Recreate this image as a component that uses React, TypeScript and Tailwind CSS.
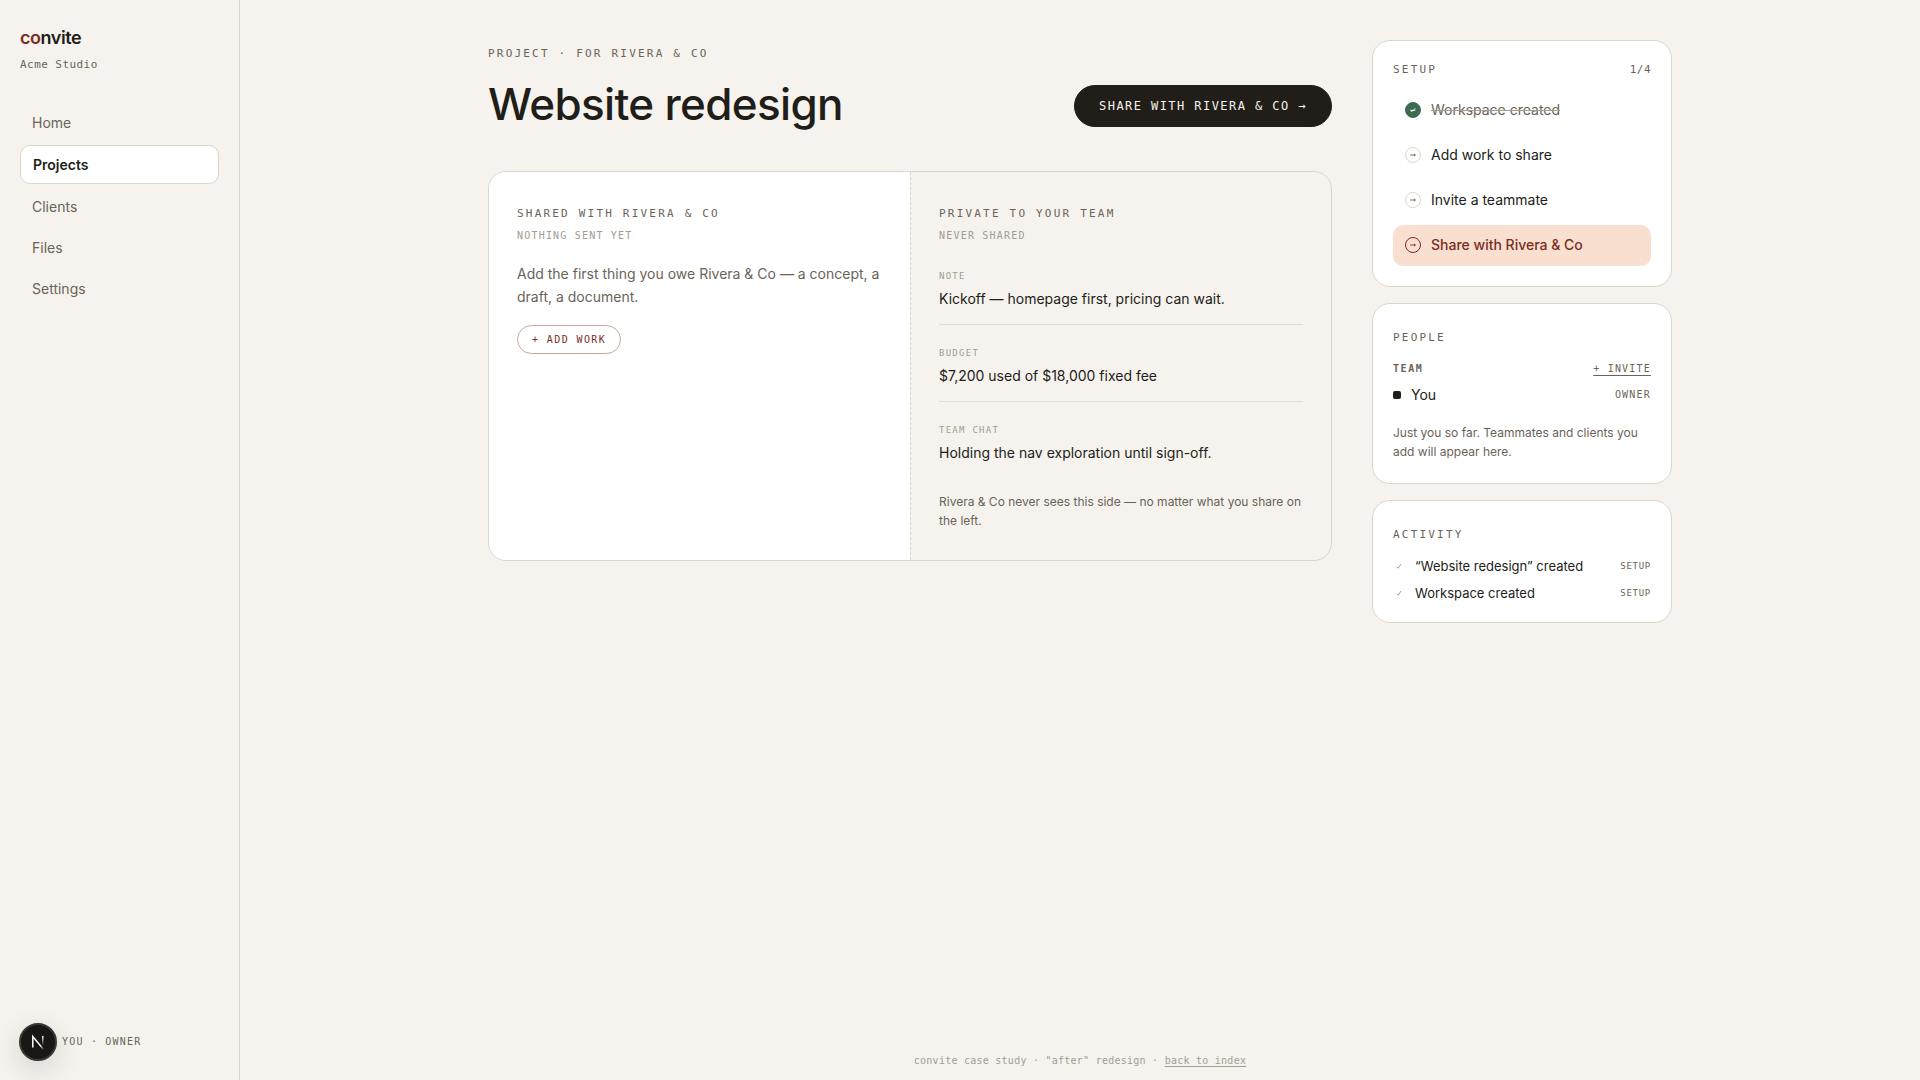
import React from "react";
import clsx from "clsx";

const mono = "font-['DejaVu_Sans_Mono',monospace]";

const navItems = ["Home", "Projects", "Clients", "Files", "Settings"];

const steps = [
  { label: "Workspace created", state: "done" },
  { label: "Add work to share", state: "todo" },
  { label: "Invite a teammate", state: "todo" },
  { label: "Share with Rivera & Co", state: "current" },
];

const privateItems = [
  { label: "Note", text: "Kickoff — homepage first, pricing can wait." },
  { label: "Budget", text: "$7,200 used of $18,000 fixed fee" },
  { label: "Team chat", text: "Holding the nav exploration until sign-off." },
];

const activity = ["“Website redesign” created", "Workspace created"];

function Label({ children }: { children: React.ReactNode }) {
  return (
    <h2
      className={clsx(
        mono,
        "text-[11px] leading-[18px] tracking-[0.2em] uppercase text-[#6b6358]"
      )}
    >
      {children}
    </h2>
  );
}

function Card({
  className,
  children,
}: {
  className: string;
  children: React.ReactNode;
}) {
  return (
    <section
      className={clsx(
        "rounded-[18px] border border-[#dcd6ca] bg-white px-5",
        className
      )}
    >
      {children}
    </section>
  );
}

function StepIcon({ state }: { state: string }) {
  return (
    <span
      className={clsx(
        "flex size-4 shrink-0 items-center justify-center rounded-full border",
        state === "done" && "border-[#3d6b4f] bg-[#3d6b4f] text-white",
        state === "todo" && "border-[#dcd6ca] text-[#6b6358]",
        state === "current" && "border-[#7a2e1f] text-[#7a2e1f]"
      )}
    >
      <svg
        viewBox="0 0 8 8"
        className="size-2"
        fill="none"
        stroke="currentColor"
        strokeWidth="0.9"
      >
        {state === "done" ? (
          <path d="M1.6 4.4 3 5.6 6.2 2.4M1.4 4.3h5" />
        ) : (
          <path d="M1.2 4h5.2M5 2.8 6.4 4 5 5.2" />
        )}
      </svg>
    </span>
  );
}

function Sidebar() {
  return (
    <aside className="sticky top-0 flex h-screen w-60 shrink-0 flex-col border-r border-[#dcd6ca] px-5 pt-6 pb-[19px]">
      <p className="text-lg leading-7 font-semibold tracking-tight">
        <span className="text-[#7a2e1f]">co</span>nvite
      </p>
      <p
        className={clsx(
          mono,
          "mt-1 text-[11px] leading-[18px] tracking-[0.04em] text-[#6b6358]"
        )}
      >
        Acme Studio
      </p>
      <nav className="mt-[30px] flex flex-col gap-1">
        {navItems.map((item) => (
          <a
            key={item}
            href="#"
            className={clsx(
              "rounded-[10px] px-3 py-2 text-sm leading-[21px]",
              item === "Projects"
                ? "border border-[#dcd6ca] bg-white font-semibold"
                : "text-[#6b6358]"
            )}
          >
            {item}
          </a>
        ))}
      </nav>
      <div className="mt-auto flex items-center gap-[5px]">
        <button
          aria-label="Open dev tools"
          className="-ml-px flex size-[38px] items-center justify-center rounded-full border-2 border-[#3a3936] bg-[#181715] shadow-[0_8px_28px_rgba(0,0,0,0.14)]"
        >
          <svg viewBox="0 0 14 16" className="h-4 w-3.5" fill="none">
            <defs>
              <linearGradient id="stem" x1="0" y1="0" x2="0" y2="1">
                <stop stopColor="#fff" />
                <stop offset="1" stopColor="#fff" stopOpacity="0" />
              </linearGradient>
              <linearGradient id="diag" x1="0" y1="0" x2="1" y2="1">
                <stop offset="0.7" stopColor="#fff" />
                <stop offset="1" stopColor="#fff" stopOpacity="0.1" />
              </linearGradient>
            </defs>
            <path d="M1.8 13.5V2.5L12.4 15.2" stroke="url(#diag)" strokeWidth="1.5" />
            <rect x="11" y="2" width="1.5" height="9.5" fill="url(#stem)" />
          </svg>
        </button>
        <p
          className={clsx(
            mono,
            "text-[10px] leading-4 tracking-[0.12em] uppercase text-[#6b6358]"
          )}
        >
          You · Owner
        </p>
      </div>
    </aside>
  );
}

function Board() {
  return (
    <div className="mt-[42px] grid grid-cols-2 overflow-hidden rounded-[18px] border border-[#dcd6ca]">
      <section className="bg-white px-7 pt-[33px] pb-7">
        <Label>Shared with Rivera & Co</Label>
        <p
          className={clsx(
            mono,
            "mt-[5px] text-[10px] leading-4 tracking-[0.12em] uppercase text-[#a39c92]"
          )}
        >
          Nothing sent yet
        </p>
        <p className="mt-[18px] text-sm leading-[23px] text-[#6b6358]">
          Add the first thing you owe Rivera & Co — a concept, a draft, a
          document.
        </p>
        <button
          className={clsx(
            mono,
            "mt-[17px] rounded-full border border-[#c9a59c] px-3.5 py-1.5 text-[10px] leading-[15px] tracking-[0.14em] uppercase text-[#7a2e1f]"
          )}
        >
          + Add work
        </button>
      </section>
      <section className="border-l border-dashed border-[#dcd6ca] px-7 pt-[33px] pb-[30px]">
        <Label>Private to your team</Label>
        <p
          className={clsx(
            mono,
            "mt-[5px] text-[10px] leading-4 tracking-[0.12em] uppercase text-[#a39c92]"
          )}
        >
          Never shared
        </p>
        <div className="mt-1 divide-y divide-[#e2ddd2]">
          {privateItems.map((item) => (
            <div key={item.label} className="pt-5 pb-[13px]">
              <p
                className={clsx(
                  mono,
                  "text-[9px] leading-4 tracking-[0.14em] uppercase text-[#a39c92]"
                )}
              >
                {item.label}
              </p>
              <p className="mt-[3px] text-sm leading-6">{item.text}</p>
            </div>
          ))}
        </div>
        <p className="mt-3.5 text-xs leading-[19px] text-[#6b6358]">
          Rivera & Co never sees this side — no matter what you share on the
          left.
        </p>
      </section>
    </div>
  );
}

function Rail() {
  return (
    <aside className="flex w-[300px] shrink-0 flex-col gap-4">
      <Card className="pt-5 pb-5">
        <div className="flex items-center justify-between">
          <Label>Setup</Label>
          <span
            className={clsx(
              mono,
              "text-[11px] leading-[18px] tracking-[0.04em] text-[#6b6358]"
            )}
          >
            1/4
          </span>
        </div>
        <ul className="mt-[11px] flex flex-col gap-1">
          {steps.map((step) => (
            <li key={step.label}>
              <a
                href="#"
                className={clsx(
                  "flex items-center gap-2.5 rounded-[10px] px-3 pt-[9px] pb-[11px] text-sm leading-[21px]",
                  step.state === "current" &&
                    "bg-[#f8dfd0] font-medium text-[#7a2e1f]"
                )}
              >
                <StepIcon state={step.state} />
                <span
                  className={clsx(
                    step.state === "done" &&
                      "text-[#6b6358] line-through decoration-[#a39c92]"
                  )}
                >
                  {step.label}
                </span>
              </a>
            </li>
          ))}
        </ul>
      </Card>

      <Card className="pt-[25px] pb-[22px]">
        <Label>People</Label>
        <div
          className={clsx(
            mono,
            "mt-3.5 flex items-center justify-between text-[10px] leading-[15px] uppercase text-[#6b6358]"
          )}
        >
          <h3 className="font-bold tracking-[0.16em]">Team</h3>
          <a href="#" className="tracking-[0.12em] underline underline-offset-3">
            + Invite
          </a>
        </div>
        <div className="mt-2 flex items-center">
          <span className="size-2 rounded-[2px] bg-[#211d18]" />
          <span className="ml-2.5 text-sm leading-[21px]">You</span>
          <span
            className={clsx(
              mono,
              "ml-auto text-[10px] leading-4 tracking-[0.12em] uppercase text-[#6b6358]"
            )}
          >
            Owner
          </span>
        </div>
        <p className="mt-[18px] text-xs leading-[19px] text-[#6b6358]">
          Just you so far. Teammates and clients you add will appear here.
        </p>
      </Card>

      <Card className="pt-[25px] pb-[19px]">
        <Label>Activity</Label>
        <ul className="mt-3 flex flex-col gap-[7px]">
          {activity.map((text) => (
            <li key={text} className="flex items-center">
              <svg
                viewBox="0 0 12 12"
                className="size-3 text-[#a39c92]"
                fill="none"
                stroke="currentColor"
              >
                <path d="M4 6.8 5.2 8.2 8 4" />
              </svg>
              <span className="ml-2.5 text-[13px] leading-5">{text}</span>
              <span
                className={clsx(
                  mono,
                  "ml-auto text-[9px] leading-4 tracking-[0.08em] uppercase text-[#6b6358]"
                )}
              >
                Setup
              </span>
            </li>
          ))}
        </ul>
      </Card>
    </aside>
  );
}

export default function App() {
  return (
    <div className="flex min-h-screen bg-[#f6f3ee] font-['Inter',sans-serif] text-[#211d18]">
      <Sidebar />
      <div className="flex min-w-0 flex-1 flex-col">
        <div className="mx-auto flex w-full max-w-[1264px] items-start gap-10 px-10 pt-10">
          <main className="min-w-0 flex-1 pt-[5px]">
            <p
              className={clsx(
                mono,
                "text-[11px] leading-[18px] tracking-[0.2em] uppercase text-[#6b6358]"
              )}
            >
              Project · for Rivera & Co
            </p>
            <div className="mt-4 flex items-center justify-between">
              <h1 className="text-[44px] leading-[50px] font-medium tracking-[-0.015em]">
                Website redesign
              </h1>
              <button
                className={clsx(
                  mono,
                  "mt-1 rounded-full border border-[#211d18] bg-[#211d18] px-6 py-[11px] text-xs leading-[18px] tracking-[0.12em] uppercase text-[#f6f3ee]"
                )}
              >
                Share with Rivera & Co →
              </button>
            </div>
            <Board />
          </main>
          <Rail />
        </div>
        <footer
          className={clsx(
            mono,
            "mt-auto pb-3 text-center text-[10px] leading-[15px] tracking-wide text-[#a39c92]"
          )}
        >
          convite case study · "after" redesign ·{" "}
          <a href="#" className="underline underline-offset-2">
            back to index
          </a>
        </footer>
      </div>
    </div>
  );
}
